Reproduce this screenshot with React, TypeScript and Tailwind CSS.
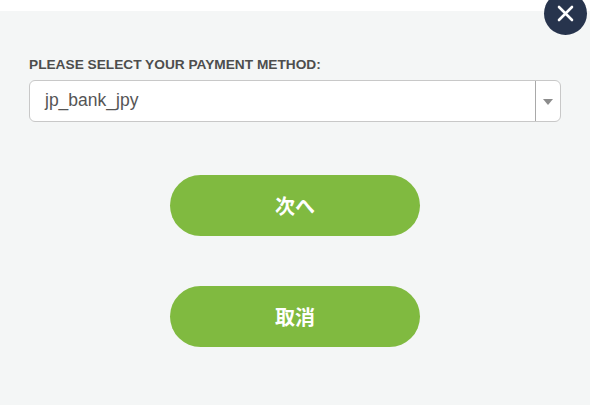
const sans = "font-['Liberation_Sans','Noto_Sans_CJK_JP',sans-serif]";

export default function App() {
  return (
    <div className={`relative h-[405px] w-[590px] overflow-hidden bg-white ${sans}`}>
      <div className="mt-[11px] h-[394px] bg-[#f4f6f6] px-[29px] pt-[46px]">
        <label className="block text-[13.7px] leading-[15px] font-bold text-[#4d4d4d]">
          PLEASE SELECT YOUR PAYMENT METHOD:
        </label>
        <div className="mt-[8px] flex h-[42px] w-[532px] rounded-[6px] border border-[#c8c8c8] bg-white">
          <div className="flex-1 pl-[15px] text-[17.5px] leading-[39px] text-[#555555]">jp_bank_jpy</div>
          <div className="flex w-[25px] items-center justify-center border-l border-[#a9a9a9]">
            <span className="mt-[1px] h-0 w-0 border-x-[5px] border-t-[6px] border-x-transparent border-t-[#8c8c8c]" />
          </div>
        </div>
        <div className="mt-[53px] flex flex-col items-center gap-[50px]">
          <button className="h-[61px] w-[250px] rounded-full bg-[#80ba40] pt-[3px] text-[20px] leading-[58px] font-bold text-white">次へ</button>
          <button className="h-[61px] w-[250px] rounded-full bg-[#80ba40] pt-[3px] text-[20px] leading-[58px] font-bold text-white">取消</button>
        </div>
      </div>
      <button className="absolute top-[-8px] left-[544px] flex h-[43px] w-[43px] items-center justify-center rounded-full bg-[#27344d]">
        <svg width="17" height="17" viewBox="0 0 17 17">
          <path d="M2 2 L15 15 M15 2 L2 15" stroke="#fff" strokeWidth="2.6" strokeLinecap="round" fill="none" />
        </svg>
      </button>
    </div>
  );
}
